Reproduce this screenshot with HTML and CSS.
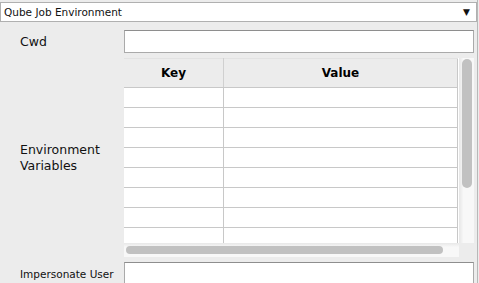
FILE: index.html
```html
<!DOCTYPE html>
<html lang="en">
<head>
    <meta charset="UTF-8">
    <title>Qube Job Environment</title>
    <link rel="stylesheet" href="styles.css">
</head>
<body>
    <div class="panel">
        <div class="section-header">
            <span>Qube Job Environment</span>
            <span class="arrow">&#9660;</span>
        </div>
        <div class="form">
            <label class="field-label">Cwd</label>
            <input type="text" class="field-input">

            <label class="field-label">Environment Variables</label>
            <div class="table-box">
                <div class="table-view">
                    <table>
                        <thead>
                            <tr><th class="col-key">Key</th><th>Value</th></tr>
                        </thead>
                        <tbody>
                            <tr><td></td><td></td></tr>
                            <tr><td></td><td></td></tr>
                            <tr><td></td><td></td></tr>
                            <tr><td></td><td></td></tr>
                            <tr><td></td><td></td></tr>
                            <tr><td></td><td></td></tr>
                            <tr><td></td><td></td></tr>
                            <tr><td></td><td></td></tr>
                        </tbody>
                    </table>
                </div>
                <div class="vscroll"><div class="vthumb"></div></div>
                <div class="hscroll"><div class="hthumb"></div></div>
                <div class="corner"></div>
            </div>

            <label class="field-label small">Impersonate User</label>
            <input type="text" class="field-input">
        </div>
    </div>
</body>
</html>
```

FILE: styles.css
```css
body {
    margin: 0;
    padding: 0;
    background-color: #ececec;
    font-family: 'DejaVu Sans', Verdana, sans-serif;
    color: #111111;
}

.panel {
    width: 478px;
    height: 283px;
    border-right: 1px solid #b8b8b8;
    padding-top: 2px;
    box-sizing: border-box;
}

.section-header {
    display: flex;
    justify-content: space-between;
    align-items: center;
    width: 477px;
    height: 20px;
    box-sizing: border-box;
    border: 1px solid #b0b0b0;
    background-color: #ffffff;
    padding: 0 6px 0 3px;
    font-size: 10.5px;
}

.arrow {
    font-size: 9px;
}

.form {
    display: grid;
    grid-template-columns: 124px 350px;
    grid-template-rows: 23px 199px 23px;
    row-gap: 5px;
    margin-top: 8px;
}

.field-label {
    display: flex;
    align-items: center;
    padding-left: 20px;
    padding-right: 40px;
    font-size: 12.5px;
    line-height: 16px;
}

.field-label.small {
    font-size: 10.5px;
    padding-right: 0;
}

.field-input {
    margin: 0;
    height: 23px;
    box-sizing: border-box;
    border: 1px solid #aaaaaa;
    border-top-color: #8e8e8e;
    background-color: #ffffff;
    outline: none;
}

.table-box {
    display: grid;
    grid-template-columns: 335px 15px;
    grid-template-rows: 185px 14px;
}

.table-view {
    overflow: hidden;
    background-color: #ffffff;
}

table {
    width: 334px;
    border-collapse: collapse;
    table-layout: fixed;
    border-right: 1px solid #c8c8c8;
}

th {
    height: 28px;
    padding: 0;
    background-color: #ececec;
    border-bottom: 1px solid #c8c8c8;
    border-top: 1px solid #e2e2e2;
    font-size: 12px;
    font-weight: bold;
    color: #000000;
}

.col-key {
    width: 99px;
    border-right: 1px solid #d0d0d0;
}

td {
    height: 19px;
    padding: 0;
    border-bottom: 1px solid #c8c8c8;
}

td:first-child {
    border-right: 1px solid #c8c8c8;
}

.vscroll {
    background: linear-gradient(to right, #e6e6e6, #f8f8f8 30%, #f8f8f8);
    padding: 1px 2px 0 3px;
}

.vthumb {
    height: 129px;
    border-radius: 5px;
    background-color: #c1c1c1;
}

.hscroll {
    background: linear-gradient(to bottom, #e8e8e8, #f8f8f8 30%, #f8f8f8);
    padding: 3px 0 0 2px;
}

.hthumb {
    width: 317px;
    height: 8px;
    border-radius: 4px;
    background-color: #c1c1c1;
}

.corner {
    background-color: #ececec;
}
```
